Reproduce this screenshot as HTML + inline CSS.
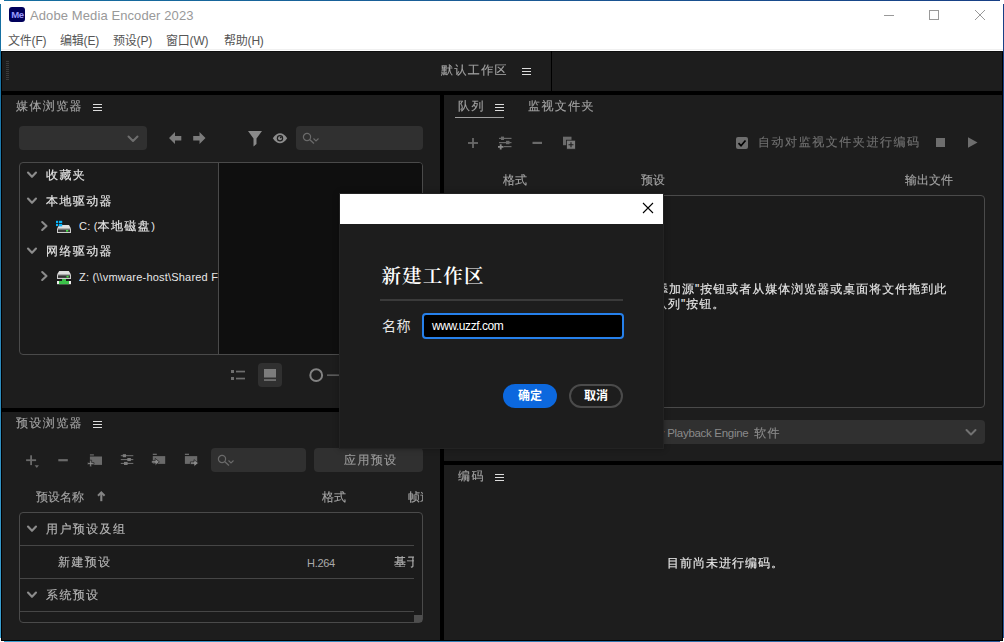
<!DOCTYPE html>
<html lang="zh-CN">
<head>
<meta charset="utf-8">
<title>Adobe Media Encoder 2023</title>
<style>
*{box-sizing:border-box;margin:0;padding:0}
html,body{width:1004px;height:642px;overflow:hidden;background:#fff}
body{font-family:"Liberation Sans","Noto Sans CJK SC",sans-serif;font-size:13px;color:#a2a2a2;position:relative}
.a{position:absolute}
.t{position:absolute;white-space:nowrap;line-height:16px;height:16px}
.cj,.h,.m{-webkit-text-stroke:.15px}
.cj{font-family:"Liberation Sans","WenQuanYi Zen Hei",sans-serif;font-size:12px;letter-spacing:1.4px}
.h{font-family:"Liberation Sans","WenQuanYi Zen Hei",sans-serif;font-size:12px}
.m{font-family:"Liberation Sans","WenQuanYi Zen Hei",sans-serif;font-size:12px;letter-spacing:1px;color:#e6e6e6}
.w{color:#e8e8e8}
.p{color:#b4b4b4}
svg{position:absolute;overflow:visible}
.fld{position:absolute;background:#303030;border-radius:4px}
.hline{position:absolute;height:1px;background:#464646}
.hb{position:absolute;width:9px;height:7px;background:linear-gradient(#dcdcdc 0 1px,transparent 1px 3px,#dcdcdc 3px 4px,transparent 4px 6px,#dcdcdc 6px 7px)}
.mn{position:absolute;white-space:nowrap;line-height:16px;top:33px;font-size:12px;color:#555;letter-spacing:-.2px}
</style>
</head>
<body>
<!-- window frame -->
<div class="a" style="left:4px;top:0;width:996px;height:1px;background:linear-gradient(90deg,#146ea0,#1a5a95 50%,#173f85)"></div>
<div class="a" style="left:0;top:4px;width:1px;height:634px;background:linear-gradient(#146ea0,#2a86b8 50%,#3a9fd0)"></div>
<div class="a" style="left:1003px;top:4px;width:1px;height:634px;background:linear-gradient(#173f85,#2a5a9a)"></div>
<div class="a" style="left:4px;top:641px;width:996px;height:1px;background:linear-gradient(90deg,#3a9fd0,#2a5a9a)"></div>
<div class="a" id="titlebar" style="left:1px;top:1px;width:1002px;height:50px;background:#fff"></div>
<div class="a" id="app" style="left:1px;top:51px;width:1002px;height:590px;background:#1d1d1d;border:1px solid #000;border-top:0"></div>

<div class="a" style="left:1px;top:49px;width:1002px;height:1px;background:#f0f0f0"></div>
<div class="a" style="left:1px;top:51px;width:1002px;height:1px;background:#0e0e0e"></div>
<!-- title bar -->
<div class="a" style="left:9px;top:7px;width:16px;height:15px;background:#00005b;border-radius:3px"></div>
<div class="t" style="left:9.4px;top:7px;width:16px;height:15px;line-height:16.4px;text-align:center;font-size:9.6px;font-weight:bold;color:#9999ff;letter-spacing:-0.5px">Me</div>
<div class="t" style="left:30px;top:8px;font-size:13px;color:#999;letter-spacing:0.1px">Adobe Media Encoder 2023</div>
<svg style="left:880px;top:5px" width="120" height="20" viewBox="0 0 120 20">
<path d="M4 10.5h10" stroke="#999" fill="none"/>
<rect x="49.5" y="5.5" width="9" height="9" stroke="#999" fill="none"/>
<path d="M95 5l10 10M105 5l-10 10" stroke="#999" fill="none"/>
</svg>

<!-- menu bar -->
<div class="mn" style="left:8px">文件(F)</div>
<div class="mn" style="left:60px">编辑(E)</div>
<div class="mn" style="left:113px">预设(P)</div>
<div class="mn" style="left:166px">窗口(W)</div>
<div class="mn" style="left:224px">帮助(H)</div>

<!-- workspace bar -->
<div class="a" style="left:1px;top:91px;width:1002px;height:4px;background:#000"></div>
<div class="a" style="left:551px;top:51px;width:1px;height:40px;background:#000"></div>
<div class="a" style="left:6px;top:61px;width:3px;height:19px;background:repeating-linear-gradient(#3a3a3a 0 1px,transparent 1px 2px)"></div>
<div class="t cj" style="left:441px;top:62px">默认工作区</div>
<div class="hb" style="left:522px;top:68px"></div>

<!-- dividers -->
<div class="a" style="left:440px;top:95px;width:4px;height:546px;background:#000"></div>
<div class="a" style="left:1px;top:408px;width:439px;height:4px;background:#000"></div>
<div class="a" style="left:444px;top:461px;width:559px;height:4px;background:#000"></div>

<!-- media browser -->
<div class="t cj" style="left:16px;top:98px">媒体浏览器</div>
<div class="hb" style="left:93px;top:104px"></div>
<div class="fld" style="left:19px;top:126px;width:128px;height:24px"></div>
<svg style="left:127px;top:133.6px" width="12" height="10" viewBox="0 0 12 10"><path d="M1.5 2.5L6 7l4.500-4.500" stroke="#6e6e6e" stroke-width="2" fill="none" stroke-linecap="round" stroke-linejoin="round"/></svg>
<svg style="left:169px;top:132px" width="37" height="12" viewBox="0 0 37 12"><path d="M0 6L6 0v4h6.300v4.500H6V12z" fill="#7c7c7c"/><path d="M36.500 6L30.500 0v4H24.200v4.500H30.500V12z" fill="#7c7c7c"/></svg>
<svg style="left:248px;top:131px" width="14" height="16" viewBox="0 0 14 16"><path d="M0 0h14L8.500 7.500V13L5.500 15.500V7.500z" fill="#8a8a8a"/></svg>
<svg style="left:272px;top:132px" width="16" height="12" viewBox="0 0 16 12"><path d="M0.800 6.200C3 2.600 5.500 1.200 8 1.200S13 2.600 15.200 6.200C13 9.800 10.500 11.200 8 11.200S3 9.800 0.800 6.200z" fill="#8c8c8c"/><circle cx="8" cy="6.200" r="3.200" fill="#1e1e1e"/><circle cx="8" cy="6.200" r="2" fill="#8c8c8c"/><circle cx="8.800" cy="5.400" r=".9" fill="#1e1e1e"/></svg>
<div class="fld" style="left:296px;top:126px;width:127px;height:24px"></div>
<svg style="left:302px;top:132px" width="18" height="12" viewBox="0 0 18 12"><circle cx="5" cy="5" r="3.600" stroke="#6a6a6a" stroke-width="1.200" fill="none"/><path d="M7.600 7.600L12 11.500" stroke="#6a6a6a" stroke-width="1.300" fill="none"/><path d="M11.500 6.500l2.500 2.500l2.500-2.500" stroke="#6a6a6a" stroke-width="1.100" fill="none"/></svg>

<div class="a" style="left:19px;top:162px;width:404px;height:193px;border:1px solid #4a4a4a;border-radius:4px;background:#1b1b1b"></div>
<div class="a" style="left:218px;top:163px;width:204px;height:191px;background:#0f0f0f;border-left:1px solid #4a4a4a;border-radius:0 3px 3px 0"></div>
<svg style="left:27px;top:171.4px" width="10" height="8" viewBox="0 0 10 8"><path d="M1 1.500L5 5.800L9 1.500" stroke="#8c8c8c" stroke-width="2.1" fill="none" stroke-linecap="round" stroke-linejoin="round"/></svg>
<div class="t cj w" style="left:46px;top:167px">收藏夹</div>
<svg style="left:27px;top:197.4px" width="10" height="8" viewBox="0 0 10 8"><path d="M1 1.500L5 5.800L9 1.500" stroke="#8c8c8c" stroke-width="2.1" fill="none" stroke-linecap="round" stroke-linejoin="round"/></svg>
<div class="t cj w" style="left:46px;top:193px">本地驱动器</div>
<svg style="left:41px;top:221px" width="7" height="10" viewBox="0 0 7 10"><path d="M1.200 1L5.500 5L1.200 9" stroke="#8c8c8c" stroke-width="2.1" fill="none" stroke-linecap="round" stroke-linejoin="round"/></svg>
<svg style="left:55px;top:220px" width="17" height="14" viewBox="0 0 17 14"><path d="M4.300 5H14L16 8.500H2z" fill="#dedede"/><rect x="2" y="8.400" width="14" height="4.600" fill="#cdcdcd"/><rect x="3" y="9.400" width="12" height="2.600" fill="#383838"/><rect x="11" y="9.900" width="2.200" height="1.700" fill="#44e044"/><g fill="#0ab4fa"><rect x="1" y=".8" width="2.200" height="2.200"/><rect x="4" y=".8" width="3.200" height="2.200"/><rect x="1" y="3.800" width="2.200" height="2.300"/><rect x="4" y="3.800" width="3.200" height="2.600"/></g></svg>
<div class="t w" style="left:79px;top:218px;font-size:11px;letter-spacing:.2px">C: (<span class="cj">本地磁盘</span>)</div>
<svg style="left:27px;top:247.4px" width="10" height="8" viewBox="0 0 10 8"><path d="M1 1.500L5 5.800L9 1.500" stroke="#8c8c8c" stroke-width="2.1" fill="none" stroke-linecap="round" stroke-linejoin="round"/></svg>
<div class="t cj w" style="left:46px;top:243px">网络驱动器</div>
<svg style="left:41px;top:271px" width="7" height="10" viewBox="0 0 7 10"><path d="M1.200 1L5.500 5L1.200 9" stroke="#8c8c8c" stroke-width="2.1" fill="none" stroke-linecap="round" stroke-linejoin="round"/></svg>
<svg style="left:56px;top:271px" width="16" height="14" viewBox="0 0 16 14"><path d="M3.200 0H12.800L15 3.500H1z" fill="#dedede"/><rect x="1" y="3.400" width="14" height="4.600" fill="#cdcdcd"/><rect x="2" y="4.300" width="12" height="2.600" fill="#333"/><rect x="10.500" y="4.800" width="2.100" height="1.700" fill="#44e044"/><rect x="6" y="8" width="4" height="2.200" fill="#3cc24a"/><rect x="1" y="10" width="14" height="3.200" fill="#eee"/><rect x="3" y="10" width="10" height="3.200" fill="#3cc24a"/></svg>
<div class="t w" style="left:79px;top:269px;width:139px;overflow:hidden;font-size:11px;letter-spacing:.2px">Z: (\\vmware-host\Shared Fo</div>

<!-- view buttons -->
<svg style="left:231px;top:369px" width="15" height="13" viewBox="0 0 15 13"><rect x="0" y="1" width="3" height="3" fill="#6e6e6e"/><rect x="5" y="1.700" width="9" height="1.700" fill="#6e6e6e"/><rect x="0" y="8" width="3" height="3" fill="#6e6e6e"/><rect x="5" y="8.700" width="9" height="1.700" fill="#6e6e6e"/></svg>
<div class="a" style="left:258px;top:363px;width:24px;height:24px;background:#303030;border-radius:4px"></div>
<svg style="left:263px;top:369px" width="14" height="13" viewBox="0 0 14 13"><rect x="1" y="0" width="12" height="8.500" fill="#7c7c7c"/><rect x="1" y="10.300" width="12" height="1.500" fill="#7c7c7c"/></svg>
<svg style="left:309px;top:368px" width="40" height="15" viewBox="0 0 40 15"><circle cx="7.200" cy="7.200" r="5.900" stroke="#828282" stroke-width="2" fill="none"/><path d="M18 7.200h22" stroke="#5a5a5a" stroke-width="1.700"/></svg>

<!-- preset browser -->
<div class="t cj" style="left:16px;top:415px">预设浏览器</div>
<div class="hb" style="left:93px;top:421px"></div>
<svg style="left:26px;top:453px" width="175" height="16" viewBox="0 0 175 16">
<g fill="#6a6a6a">
<rect x="0.1" y="6.3" width="10" height="1.8"/><rect x="4.2" y="2.3" width="1.8" height="9.8"/><path d="M8.7 12.3h4.2l-2.100 2.800z"/>
<rect x="32.3" y="6.100" width="9.5" height="2.200"/>
<rect x="63.9" y="1.3" width="4" height="1.2"/><rect x="63.9" y="3.5" width="12.1" height="8.4"/>
<path d="M61.400 9.600h2.400v-2.400h1.800v2.400h2.400v1.800h-2.400v2.400h-1.800v-2.400h-2.400z" fill="#8a8a8a" stroke="#1e1e1e" stroke-width=".7"/>
<rect x="94.8" y="2.100" width="12.5" height="1.100"/><rect x="96.8" y="1.200" width="3.200" height="3" fill="#7c7c7c"/>
<rect x="94.8" y="6" width="12.5" height="1.100"/><rect x="101.3" y="5" width="3.600" height="3.100" fill="#7c7c7c"/>
<rect x="94.8" y="9.900" width="12.5" height="1.100"/><rect x="98" y="8.900" width="3.600" height="3.100" fill="#7c7c7c"/>
<rect x="126.8" y=".7" width="4" height="1.300"/><rect x="126.8" y="3.100" width="12.4" height="7.800"/>
<path d="M125.600 7.700h3.600v-2.300l4.200 3.500l-4.200 3.500v-2.300h-3.600z" fill="#8a8a8a" stroke="#1e1e1e" stroke-width=".7"/>
<rect x="158.9" y=".7" width="4.100" height="1.300"/><rect x="158.9" y="3.100" width="12.300" height="7.800"/>
<path d="M164.400 8.900h3.600v-2.300l4.400 3.500l-4.400 3.500v-2.300h-3.600z" fill="#8a8a8a" stroke="#1e1e1e" stroke-width=".7"/>
</g></svg>
<div class="fld" style="left:211px;top:448px;width:95px;height:24px"></div>
<svg style="left:217px;top:454px" width="18" height="12" viewBox="0 0 18 12"><circle cx="5" cy="5" r="3.600" stroke="#6a6a6a" stroke-width="1.200" fill="none"/><path d="M7.600 7.600L12 11.500" stroke="#6a6a6a" stroke-width="1.300" fill="none"/><path d="M11.500 6.500l2.500 2.500l2.500-2.500" stroke="#6a6a6a" stroke-width="1.100" fill="none"/></svg>
<div class="fld" style="left:314px;top:448px;width:109px;height:24px"></div>
<div class="t cj" style="left:344px;top:452px;color:#9a9a9a">应用预设</div>
<div class="t h" style="left:36px;top:489px">预设名称</div>
<svg style="left:97px;top:490.500px" width="9" height="11" viewBox="0 0 9 11"><path d="M4.300 2v8.200" stroke="#858585" stroke-width="2.100" fill="none"/><path d="M1 4.800L4.300 1.400L7.600 4.800" stroke="#858585" stroke-width="2" fill="none"/></svg>
<div class="t h" style="left:322px;top:489px">格式</div>
<div class="t h" style="left:408px;top:489px;width:15px;overflow:hidden">帧速</div>
<div class="a" style="left:19px;top:512px;width:404px;height:111px;border:1px solid #4a4a4a;border-radius:4px;background:#1b1b1b"></div>
<div class="hline" style="left:20px;top:545px;width:394px"></div>
<div class="hline" style="left:20px;top:578px;width:394px"></div>
<div class="hline" style="left:20px;top:611px;width:394px"></div>
<div class="a" style="left:414px;top:615px;width:8px;height:7px;background:#4e4e4e"></div>
<svg style="left:27px;top:525px" width="10" height="8" viewBox="0 0 10 8"><path d="M1 1.500L5 5.800L9 1.500" stroke="#8c8c8c" stroke-width="2.1" fill="none" stroke-linecap="round" stroke-linejoin="round"/></svg>
<div class="t cj p" style="left:46px;top:521px">用户预设及组</div>
<div class="t cj p" style="left:58px;top:554px">新建预设</div>
<div class="t p" style="left:307px;top:555px;font-size:11px;letter-spacing:-.3px;color:#aaa">H.264</div>
<div class="t h p" style="left:394px;top:554px;width:20px;overflow:hidden;letter-spacing:1px">基于</div>
<svg style="left:27px;top:591px" width="10" height="8" viewBox="0 0 10 8"><path d="M1 1.500L5 5.800L9 1.500" stroke="#8c8c8c" stroke-width="2.1" fill="none" stroke-linecap="round" stroke-linejoin="round"/></svg>
<div class="t cj p" style="left:46px;top:587px">系统预设</div>

<!-- queue panel -->
<div class="t cj" style="left:458px;top:98px">队列</div>
<div class="hb" style="left:495px;top:104px"></div>
<div class="a" style="left:455px;top:117px;width:49px;height:1px;background:#a0a0a0"></div>
<div class="t cj" style="left:528px;top:98px">监视文件夹</div>
<svg style="left:468px;top:136px" width="110" height="14" viewBox="0 0 110 14">
<g fill="#6a6a6a">
<rect x="0" y="6.100" width="10" height="1.800"/><rect x="4.100" y="2" width="1.800" height="10"/>
<rect x="31" y="1.800" width="12.500" height="1.200"/><rect x="33" y=".6" width="3" height="3.400"/>
<rect x="31" y="6" width="12.500" height="1.200"/><rect x="38" y="4.800" width="3.500" height="3.400"/>
<rect x="36" y="10" width="7.500" height="1.200"/><path d="M30 10h5.500v1.800H30z M31.800 8.200h1.800v5.400h-1.800z" fill="#8a8a8a"/>
<rect x="64.500" y="5.800" width="9.500" height="2.200"/>
<rect x="95" y=".7" width="8.500" height="8.500"/><rect x="98.500" y="4.200" width="9" height="9" fill="#7a7a7a" stroke="#1e1e1e" stroke-width=".8"/><path d="M100.500 8.700h5M103 6.200v5" stroke="#1e1e1e" stroke-width="1.100"/>
</g></svg>
<div class="a" style="left:736px;top:137px;width:12px;height:12px;background:#6e6e6e;border-radius:2px"></div>
<svg style="left:736px;top:137px" width="12" height="12" viewBox="0 0 12 12"><path d="M2.500 6.200L5 8.700L9.500 3.500" stroke="#000" stroke-width="1.700" fill="none"/></svg>
<div class="t cj" style="left:758px;top:134px;color:#707070;letter-spacing:1.55px">自动对监视文件夹进行编码</div>
<div class="a" style="left:936px;top:138px;width:9px;height:9px;background:#6e6e6e"></div>
<svg style="left:968px;top:137px" width="10" height="11" viewBox="0 0 10 11"><path d="M0 0.300L9.500 5.500L0 10.700z" fill="#6e6e6e"/></svg>
<div class="t h" style="left:503px;top:172px">格式</div>
<div class="t h" style="left:641px;top:172px">预设</div>
<div class="t h" style="left:905px;top:172px">输出文件</div>
<div class="a" style="left:452px;top:195px;width:533px;height:213px;border:1px solid #4a4a4a;border-radius:4px;background:#1b1b1b"></div>
<div class="t m" style="left:656px;top:281px">添加源"按钮或者从媒体浏览器或桌面将文件拖到此</div>
<div class="t m" style="left:655px;top:296px">队列"按钮。</div>
<div class="fld" style="left:452px;top:420px;width:533px;height:24px"></div>
<div class="t" style="left:468px;width:313px;text-align:right;top:425px;font-size:11.5px;letter-spacing:-.3px;color:#8a8a8a">Mercury Playback Engine&nbsp; <span class="cj">软件</span></div>
<svg style="left:965px;top:428px" width="12" height="10" viewBox="0 0 12 10"><path d="M1.500 2L6 6.500l4.500-4.500" stroke="#727272" stroke-width="2" fill="none" stroke-linecap="round" stroke-linejoin="round"/></svg>

<!-- encoding panel -->
<div class="t cj" style="left:458px;top:468px">编码</div>
<div class="hb" style="left:495px;top:474px"></div>
<div class="t m" style="left:667px;top:555px">目前尚未进行编码。</div>

<!-- dialog -->
<div class="a" id="dlg" style="left:339px;top:193px;width:325px;height:256px;background:#1d1d1d;border:1px solid #232323;box-shadow:0 0 6px rgba(0,0,0,.3)"></div>

<div class="a" style="left:340px;top:194px;width:323px;height:30px;background:#fff"></div>
<svg style="left:643px;top:203px" width="10" height="10" viewBox="0 0 10 10"><path d="M0 0l10 10M10 0L0 10" stroke="#000" stroke-width="1.100" fill="none"/></svg>
<div class="t" style="left:381.5px;top:263px;font-family:'Liberation Serif','Noto Serif CJK SC',serif;font-weight:600;font-size:19.5px;letter-spacing:1.1px;line-height:28px;height:28px;color:#fff">新建工作区</div>
<div class="a" style="left:380px;top:299px;width:243px;height:2px;background:#3a3a3a"></div>
<div class="t w" style="left:382px;top:318px;font-size:14px;letter-spacing:.6px">名称</div>
<div class="a" style="left:422px;top:313px;width:202px;height:26px;background:#000;border:2px solid #2680eb;border-radius:4px"></div>
<div class="t" style="left:432px;top:318px;font-size:12px;color:#fff;letter-spacing:-.45px">www.uzzf.com</div>
<div class="a" style="left:503px;top:384px;width:54px;height:24px;background:#0c68de;border-radius:12px"></div>
<div class="t" style="left:503px;top:388px;width:54px;text-align:center;font-size:12px;font-weight:bold;color:#fff">确定</div>
<div class="a" style="left:569px;top:384px;width:54px;height:24px;border:2px solid #4b4b4b;border-radius:12px"></div>
<div class="t" style="left:569px;top:388px;width:54px;text-align:center;font-size:12px;font-weight:bold;color:#fff">取消</div>
</body>
</html>
